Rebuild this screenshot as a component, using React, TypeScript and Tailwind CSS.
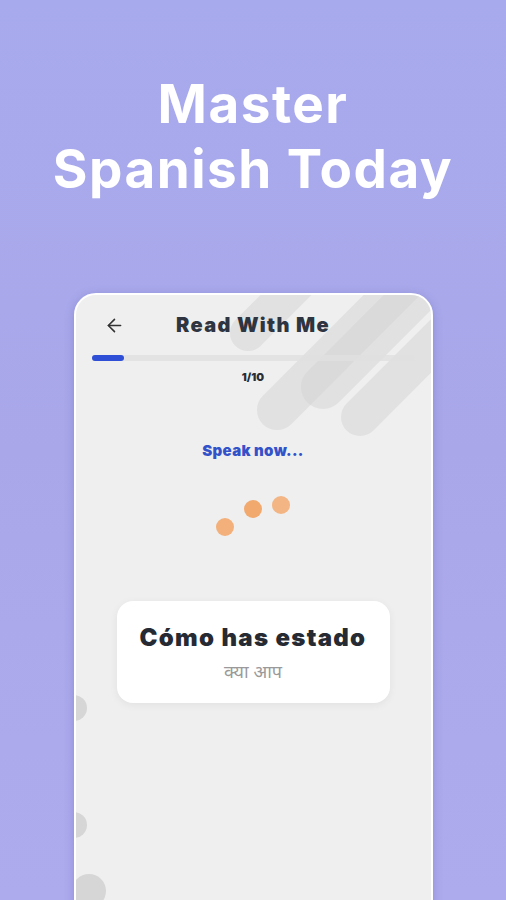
import { ArrowLeft } from "lucide-react";

const poppins = { fontFamily: "Inter, 'Noto Sans', sans-serif" };

// soft grey capsules and edge bubbles painted behind the screen content
function Decor() {
  return (
    <svg className="pointer-events-none absolute inset-0" width="355" height="636" viewBox="0 0 355 636">
      <g stroke="#d4d4d4" strokeLinecap="round" strokeOpacity="0.5">
        <line x1="172" y1="38" x2="232" y2="-22" strokeWidth="36" />
        <line x1="201" y1="115" x2="345" y2="-29" strokeWidth="40" />
        <line x1="247" y1="92" x2="380" y2="-41" strokeWidth="44" />
        <line x1="284" y1="122" x2="390" y2="16" strokeWidth="38" />
      </g>
      <g fill="#d6d6d6">
        <circle cx="-2" cy="413" r="13" />
        <circle cx="-2" cy="530" r="13" />
        <circle cx="13" cy="596" r="17" />
      </g>
    </svg>
  );
}

export default function App() {
  return (
    <div className="h-[900px] w-[506px] overflow-hidden bg-gradient-to-b from-[#a8aaee] via-[#a9a7ea] to-[#aeaaee]">
      <h1
        className="pt-[72px] text-center text-[53px] font-bold leading-[65px] tracking-[1.5px] text-white"
        style={poppins}
      >
        Master
        <br />
        Spanish Today
      </h1>

      <div className="relative mx-auto mt-[91px] h-[640px] w-[359px] overflow-hidden rounded-[22px] border-2 border-white bg-[#efefef] shadow-[0_2px_10px_rgba(60,60,140,0.25)]">
        <Decor />

        <div className="relative flex flex-col items-center" style={poppins}>
          <div className="mt-[15px] grid h-[26px] w-full grid-cols-[22px_1fr_22px] items-center px-[28px]">
            <ArrowLeft className="h-[21px] w-[21px] text-[#333]" strokeWidth={1.8} />
            <p className="text-center text-[20px] font-black tracking-[1.3px] text-[#2e3440]">
              Read With Me
            </p>
            <span />
          </div>

          <div className="mt-[19px] h-[6px] w-[323px] rounded-full bg-[#e0e0e0]/80">
            <div className="h-[6px] w-[32px] rounded-full bg-[#2f4fd6]" />
          </div>

          <p className="mt-[8px] text-[11px] font-black text-[#2a2e36]">1/10</p>

          <p className="mt-[54px] text-[15px] font-black tracking-[0.3px] text-[#3352c9]">
            Speak now...
          </p>

          <svg className="mt-[32px]" width="78" height="44" viewBox="0 0 78 44">
            <circle cx="11" cy="33" r="9" fill="#f3b07a" />
            <circle cx="39" cy="15" r="9" fill="#f1a96e" />
            <circle cx="67" cy="11" r="9" fill="#f3b584" />
          </svg>

          <div className="mt-[63px] flex h-[102px] w-[273px] flex-col items-center justify-center rounded-[16px] bg-white shadow-[0_2px_8px_rgba(0,0,0,0.06)]">
            <p className="text-[24px] font-black tracking-[1.3px] text-[#262a33]">
              Cómo has estado
            </p>
            <p className="mt-[2px] text-[18px] text-[#9a9a9a]" style={{ fontFamily: "'Noto Sans', sans-serif" }}>
              क्या आप
            </p>
          </div>
        </div>
      </div>
    </div>
  );
}
